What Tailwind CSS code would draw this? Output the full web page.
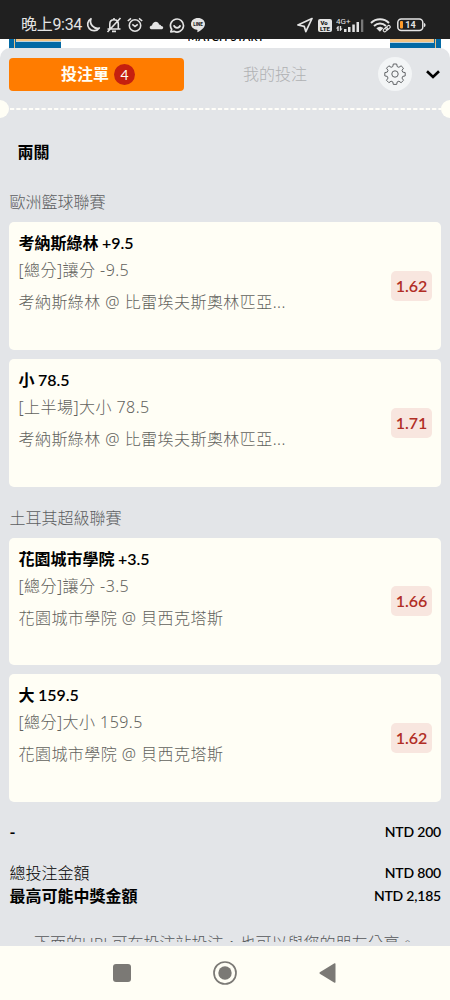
<!DOCTYPE html>
<html lang="zh-Hant">
<head>
<meta charset="utf-8">
<meta name="viewport" content="width=device-width">
<title>投注單</title>
<script src="https://cdn.jsdelivr.net/npm/@tailwindcss/browser@4"></script>
</head>
<body class="flex h-[1000px] w-[450px] flex-col overflow-hidden bg-white font-['Lato','Noto_Sans_CJK_TC',sans-serif] text-base text-black">

<!-- Status bar -->
<header class="flex h-[39px] shrink-0 items-start justify-between bg-[#202020] pt-[15px] pr-[24px] pl-[21px] text-[#e4e4e4]">
  <div class="flex h-5 items-center">
    <span class="w-[64px] whitespace-nowrap font-['Roboto','Noto_Sans_CJK_TC',sans-serif] text-[16px] leading-[22px] tracking-[-0.3px]">晚上9:34</span>
    <svg class="h-4 w-4" viewBox="0 0 16 16" fill="none" stroke="currentColor" stroke-width="1.7" stroke-linejoin="round"><path d="M6 1.7A6.4 6.4 0 1 0 14.3 11 7 7 0 0 1 6 1.7Z"/></svg>
    <svg class="ml-[5px] h-4 w-4" viewBox="0 0 16 16" fill="none" stroke="currentColor" stroke-width="1.6"><path d="M3.8 11.5V7c0-2.600 1.500-4.300 4.200-4.300S12.300 4.400 12.300 7v4.500M1.500 12h13M8 1v2M6 14.400h4M14.500 1 1.500 15"/></svg>
    <svg class="ml-[5px] h-4 w-4" viewBox="0 0 16 16" fill="none" stroke="currentColor" stroke-width="1.6"><circle cx="8" cy="8.500" r="5.700"/><path d="M.8 4 4 1.300M15.200 4 12 1.300M5.300 7.300 8 9.400l2.800-2.100"/></svg>
    <svg class="ml-[6px] h-4 w-[15px]" viewBox="0 0 15 16" fill="currentColor"><path d="M3 12.200C.2 12.200-.2 8.900 3 8.500 4 3.500 9.500 3.700 10 7.500c1.200-.2 2 .6 2.200 1.500 2.700.2 2.600 3.200 0 3.200Z"/></svg>
    <svg class="ml-[5px] h-4 w-4" viewBox="0 0 16 16" fill="none" stroke="currentColor" stroke-width="1.700"><path d="M2.700 12.300A6.500 6.500 0 1 1 5 14.300l-3.200.5ZM4.800 8.300c.8 3.300 5.800 3.300 6.500 0" stroke-linejoin="round"/></svg>
    <svg class="ml-[6px] h-4 w-[14px]" viewBox="0 0 14 16"><path fill="currentColor" d="M7 1C3 1 0 3.600 0 7c0 3.200 2.700 5.300 6 5.800.8.200.4 1.500.3 2.500C9.500 14 14 10.700 14 7c0-3.400-3-6-7-6Z"/><text x="7" y="8.500" text-anchor="middle" font-family="Roboto" font-weight="900" font-size="4.500" fill="#202020">LINE</text></svg>
  </div>
  <div class="flex h-5 items-center">
    <svg class="mr-[2px] h-4 w-4" viewBox="0 0 16 16" fill="none" stroke="currentColor" stroke-width="1.700" stroke-linejoin="round"><path d="M15 1.500.9 8l6.300 1.300L8.800 14.600Z"/></svg>
    <svg class="ml-[3px] h-[13px] w-[14px]" viewBox="0 0 14 13"><rect width="14" height="13" rx="2" fill="currentColor"/><g font-family="Roboto" font-weight="900" font-size="6" fill="#202020" text-anchor="middle"><text x="6" y="6">Vo</text><text x="7" y="11.700">LTE</text></g></svg>
    <svg class="ml-[4px] h-[16px] w-[28px]" viewBox="0 0 28 16" fill="currentColor"><text x="0" y="7" font-family="Roboto" font-weight="400" font-size="8">4G+</text><path d="M2 9 0 11.500h1.300V14h1.400V9ZM4.500 14l2-2.500H5.200V9H3.800v5ZM8 12h2.500v3H8ZM12 10h2.500v5H12ZM16.300 7.500h2.500V15h-2.500ZM20.500 5H23v10h-2.500Z"/><path opacity=".45" d="M25 2.500h2.300V15H25Z"/></svg>
    <svg class="ml-[6px] h-[16px] w-[21px]" viewBox="0 0 21 16" fill="none" stroke="currentColor" stroke-width="2"><path d="M1 6c5-5 13-5 18 0M4 9c3.500-3.200 8.500-3.200 12 0"/><path d="M6.300 11.300c2.200-2 5-2 7 0L9.900 14.800Z" fill="currentColor" stroke="none"/><g fill="none" stroke-width="1.100"><rect x="13" y="11.200" width="5" height="2.800" rx="1.400" transform="rotate(-45 15.500 12.600)"/><rect x="15.500" y="9.300" width="5" height="2.800" rx="1.400" transform="rotate(-45 18 10.700)"/></g></svg>
    <svg class="ml-[6px] h-[14px] w-[29px]" viewBox="0 0 29 14"><rect x=".8" y="1" width="25" height="11.500" rx="3.500" fill="none" stroke="currentColor" stroke-width="1.500"/><path fill="currentColor" d="M27 5c2 0 2 4 0 4Z"/><rect x="3" y="3" width="3" height="7.500" rx="1" fill="#ff9c2a"/><text x="13.500" y="10" text-anchor="middle" font-family="Roboto" font-weight="700" font-size="9" fill="currentColor">14</text></svg>
  </div>
</header>

<main class="relative flex min-h-0 flex-1 flex-col overflow-hidden">
  <!-- Page behind the slip -->
  <div class="flex h-[16px] shrink-0 justify-between bg-white">
    <div class="ml-[9px] flex w-[52px] gap-[1px] bg-[#0369a5] pl-[5px]"><span class="w-px bg-[#e9bf83]"></span><span class="h-[3px] flex-1 border-b border-[#bfd4df] bg-[#f2c283]"></span></div>
    <div class="relative w-[76px] overflow-hidden"><span class="absolute top-[-8px] left-0 whitespace-nowrap font-['Lato'] text-[11px] leading-3 font-semibold tracking-[0.2px]">MATCH START</span></div>
    <div class="mr-[9px] flex w-[51px] gap-[1px] bg-[#0369a5] pr-[5px]"><span class="h-[4px] flex-1 border-b border-[#bfd4df] bg-[#f2c283]"></span><span class="w-px bg-[#e9bf83]"></span></div>
  </div>

  <!-- Bet slip -->
  <section class="relative -mt-[7px] flex flex-1 flex-col rounded-t-[10px] bg-[#e3e5e8]">
    <div class="flex h-[52px] items-center pr-[10px] pl-[9px]">
      <button class="flex h-[33px] w-[175px] items-center justify-center gap-[5px] rounded-[4px] bg-[#ff7c00] pl-[3px] font-bold text-[#fffef5]"><span class="leading-5">投注單</span><span class="flex h-[21px] w-[21px] items-center justify-center rounded-full bg-[#c5200f] text-[14px] font-normal">4</span></button>
      <span class="w-[182px] text-center leading-5 font-light text-[#b0b1b3]">我的投注</span>
      <span class="ml-[12px] flex h-[34px] w-[34px] items-center justify-center rounded-full bg-[#f3f5f6]">
        <svg class="h-[22px] w-[22px]" viewBox="0 0 22 22" fill="none" stroke="#606366" stroke-width="1" stroke-linejoin="round"><circle cx="11" cy="11" r="3.200"/><path d="M9.300 1h3.400l.5 2.600 1.700.7 2.200-1.500 2.400 2.400L18 7.300l.7 1.800 2.500.5v3.300l-2.500.5-.7 1.700 1.500 2.200-2.400 2.400-2.200-1.500-1.700.7-.5 2.500H9.300l-.5-2.500-1.700-.7-2.200 1.500-2.400-2.400L4 15.100l-.7-1.700-2.500-.5V9.600l2.500-.5L4 7.300 2.500 5.200l2.400-2.400 2.200 1.500 1.700-.7Z"/></svg>
      </span>
      <svg class="ml-[14px] h-[9px] w-[14px]" viewBox="0 0 14 9" fill="none" stroke="#000" stroke-width="2.600"><path d="m1 1.200 6 5.800 6-5.800"/></svg>
    </div>
    <div class="-mt-px flex h-[20px] items-center">
      <span class="-ml-[9px] h-[18px] w-[18px] rounded-full bg-[#fffef5]"></span>
      <svg class="h-[2px] flex-1" viewBox="0 0 432 2" preserveAspectRatio="none"><path d="M1 1h431" stroke="#fffef9" stroke-width="2" stroke-dasharray="4.200 2.100"/></svg>
      <span class="-mr-[9px] h-[18px] w-[18px] rounded-full bg-[#fffef5]"></span>
    </div>

    <div class="flex flex-col px-[9px]">
      <h1 class="mt-[23px] h-[20px] pl-[8.5px] leading-5 font-bold">兩關</h1>
      <h2 class="mt-[30px] h-[20px] pl-[0.5px] leading-5 font-light text-[#5c5e61]">歐洲籃球聯賽</h2>

      <article class="mt-[9.5px] flex h-[128px] items-center justify-between rounded-[5px] bg-[#fffef5] pr-[9px] pl-[9.5px]">
        <div class="h-full pt-[9.5px]">
          <h3 class="h-[24px] leading-6 font-bold">考納斯綠林 <span class="-ml-[0.5px] font-semibold">+9.5</span></h3>
          <p class="h-[31px] font-['Noto_Sans','Noto_Sans_CJK_TC',sans-serif] leading-[31px] font-light tracking-[0.45px] text-[#62625d]">[總分]讓分 -9.5</p>
          <p class="h-[32px] font-['Noto_Sans','Noto_Sans_CJK_TC',sans-serif] leading-8 font-light tracking-[0.45px] text-[#62625d]">考納斯綠林 @ 比雷埃夫斯奧林匹亞...</p>
        </div>
        <span class="h-[30px] w-[41px] rounded-[5px] bg-[#f8e6df] text-center text-[16px] leading-[29px] font-semibold text-[#b12e25]">1.62</span>
      </article>

      <article class="mt-[9.5px] flex h-[128px] items-center justify-between rounded-[5px] bg-[#fffef5] pr-[9px] pl-[9.5px]">
        <div class="h-full pt-[9px]">
          <h3 class="h-[24px] leading-6 font-bold">小 <span class="-ml-[0.5px] font-semibold">78.5</span></h3>
          <p class="h-[31px] font-['Noto_Sans','Noto_Sans_CJK_TC',sans-serif] leading-[31px] font-light tracking-[0.45px] text-[#62625d]">[上半場]大小 78.5</p>
          <p class="h-[32px] font-['Noto_Sans','Noto_Sans_CJK_TC',sans-serif] leading-8 font-light tracking-[0.45px] text-[#62625d]">考納斯綠林 @ 比雷埃夫斯奧林匹亞...</p>
        </div>
        <span class="h-[30px] w-[41px] rounded-[5px] bg-[#f8e6df] text-center text-[16px] leading-[29px] font-semibold text-[#b12e25]">1.71</span>
      </article>

      <h2 class="mt-[20.5px] h-[20px] pl-[0.5px] leading-5 font-light text-[#5c5e61]">土耳其超級聯賽</h2>

      <article class="mt-[10px] flex h-[127.500px] items-center justify-between rounded-[5px] bg-[#fffef5] pr-[9px] pl-[9.5px]">
        <div class="h-full pt-[9px]">
          <h3 class="h-[24px] leading-6 font-bold">花園城市學院 <span class="-ml-[0.5px] font-semibold">+3.5</span></h3>
          <p class="h-[31px] font-['Noto_Sans','Noto_Sans_CJK_TC',sans-serif] leading-[31px] font-light tracking-[0.45px] text-[#62625d]">[總分]讓分 -3.5</p>
          <p class="h-[32px] font-['Noto_Sans','Noto_Sans_CJK_TC',sans-serif] leading-8 font-light tracking-[0.45px] text-[#62625d]">花園城市學院 @ 貝西克塔斯</p>
        </div>
        <span class="h-[30px] w-[41px] rounded-[5px] bg-[#f8e6df] text-center text-[16px] leading-[29px] font-semibold text-[#b12e25]">1.66</span>
      </article>

      <article class="mt-[9px] flex h-[128px] items-center justify-between rounded-[5px] bg-[#fffef5] pr-[9px] pl-[9.5px]">
        <div class="h-full pt-[9px]">
          <h3 class="h-[24px] leading-6 font-bold">大 <span class="-ml-[0.5px] font-semibold">159.5</span></h3>
          <p class="h-[31px] font-['Noto_Sans','Noto_Sans_CJK_TC',sans-serif] leading-[31px] font-light tracking-[0.45px] text-[#62625d]">[總分]大小 159.5</p>
          <p class="h-[32px] font-['Noto_Sans','Noto_Sans_CJK_TC',sans-serif] leading-8 font-light tracking-[0.45px] text-[#62625d]">花園城市學院 @ 貝西克塔斯</p>
        </div>
        <span class="h-[30px] w-[41px] rounded-[5px] bg-[#f8e6df] text-center text-[16px] leading-[30px] font-semibold text-[#b12e25]">1.62</span>
      </article>

      <div class="mt-[20px] flex h-[20px] items-center justify-between pl-[0.5px] leading-5"><span class="font-bold">-</span><span class="text-[14px] font-semibold tracking-[-0.2px]">NTD 200</span></div>
      <div class="mt-[20px] flex h-[22px] items-center justify-between pl-[0.5px] leading-5"><span class="font-light">總投注金額</span><span class="text-[14px] font-semibold tracking-[-0.2px]">NTD 800</span></div>
      <div class="flex h-[24px] items-center justify-between pl-[0.5px] leading-5"><span class="font-bold">最高可能中獎金額</span><span class="text-[14px] font-semibold tracking-[-0.2px]">NTD 2,185</span></div>
      <div class="mt-[22px] h-[12px] overflow-hidden pl-[25px] leading-[26px] font-light whitespace-nowrap text-[#55575a]">下面的URL可在投注站投注，也可以與您的朋友分享。</div>
    </div>
  </section>
</main>

<!-- System navigation -->
<nav class="flex h-[54px] shrink-0 items-center justify-center bg-[#fffef5] pr-[2px] text-[#7b7975]">
  <span class="h-[18px] w-[18px] rounded-[3px] bg-[#7b7975]"></span>
  <svg class="ml-[82px] h-[24px] w-[24px]" viewBox="0 0 24 24"><circle cx="12" cy="12" r="11" fill="none" stroke="currentColor" stroke-width="1.700"/><circle cx="12" cy="12" r="6.700" fill="currentColor"/></svg>
  <svg class="ml-[82px] h-[20px] w-[17px]" viewBox="0 0 17 20" fill="currentColor"><path d="M15.500.3Q16.500 0 16.500 1v18q0 1-1 .7L.8 10.700Q0 10 .8 9.300Z"/></svg>
</nav>
</body>
</html>
